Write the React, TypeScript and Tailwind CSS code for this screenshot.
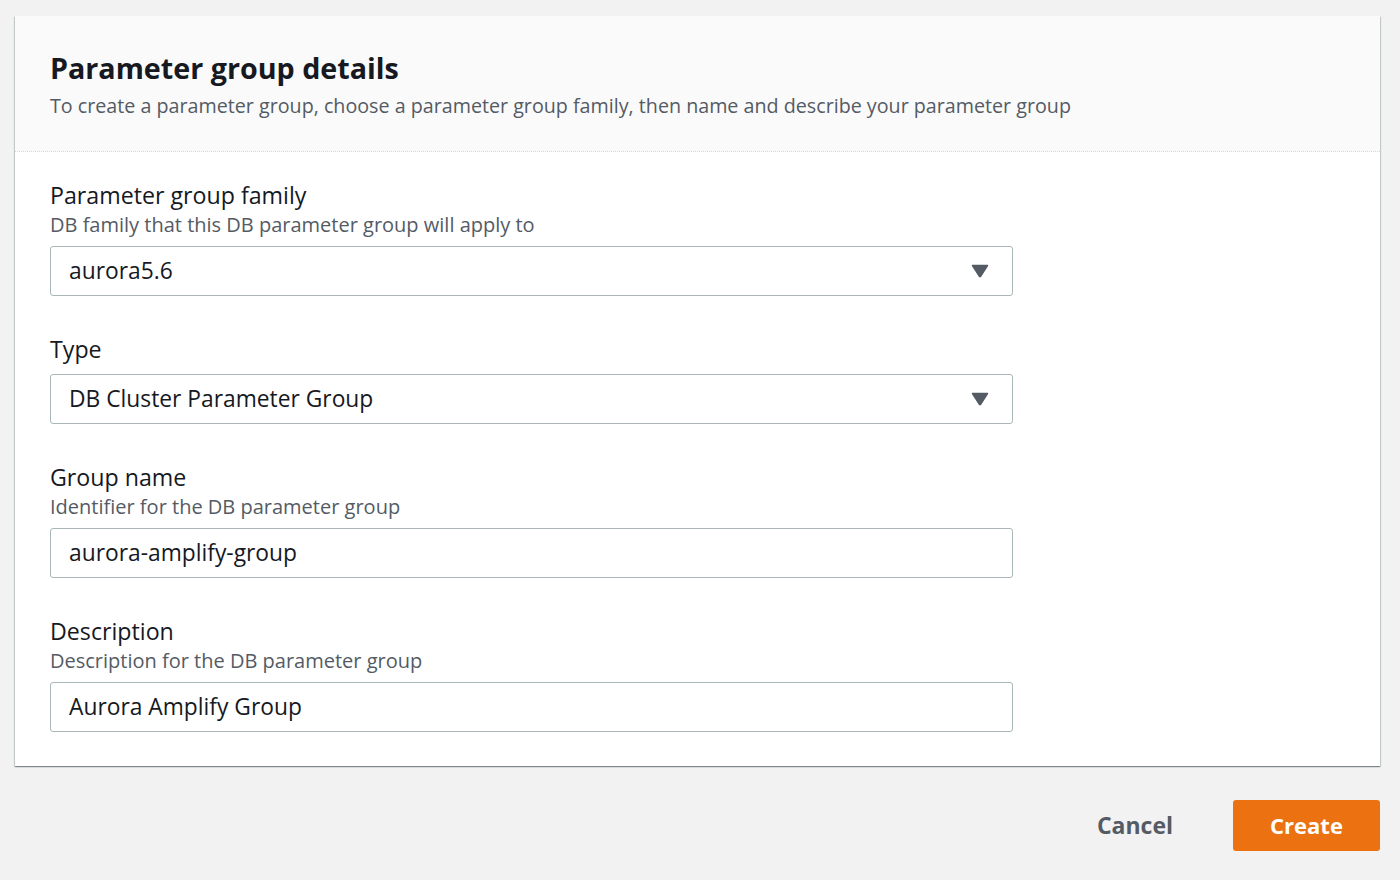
import React from 'react';

const font = { fontFamily: '"Open Sans", "Noto Sans", Arial, sans-serif' };

interface FieldProps {
  label: string;
  hint?: string;
  value: string;
  select?: boolean;
}

const Caret = () => (
  <svg width="18" height="14" viewBox="0 0 18 14" className="shrink-0">
    <path d="M1.5 1.5 H16.5 L9.6 12.3 Q9 13.2 8.4 12.3 Z" fill="#545b64" stroke="#545b64" strokeWidth="1.5" strokeLinejoin="round" />
  </svg>
);

const Field: React.FC<FieldProps> = ({ label, hint, value, select }) => {
  return (
    <div className="w-[963px]">
      <div className="text-[23.2px] leading-[28px] text-[#16191f]">{label}</div>
      {hint && (
        <div className="mt-[3px] text-[20px] leading-[26px] text-[#545b64]">{hint}</div>
      )}
      <div
        className={
          hint
            ? 'mt-2 flex h-[50px] items-center justify-between rounded-[3px] border border-[#aab7b8] bg-white pl-[18px] pr-[23px]'
            : 'mt-[11px] flex h-[50px] items-center justify-between rounded-[3px] border border-[#aab7b8] bg-white pl-[18px] pr-[23px]'
        }
      >
        <span className="text-[22.8px] text-[#16191f]">{value}</span>
        {select && <Caret />}
      </div>
    </div>
  );
};

export default function App() {
  return (
    <div className="min-h-[880px] bg-[#f2f2f2] px-[15px] pt-[16px]" style={font}>
      <div className="w-[1365px] bg-white shadow-[0_1px_1px_0_rgba(0,28,36,0.3),1px_1px_1px_0_rgba(0,28,36,0.15),-1px_1px_1px_0_rgba(0,28,36,0.15)]">
        <div className="border-b border-dotted border-[#d5dbdb] bg-[#fafafa] px-[35px] pb-[32px] pt-[34px]">
          <h1 className="text-[28.7px] font-bold leading-[36px] text-[#16191f]">
            Parameter group details
          </h1>
          <p className="mt-[7px] text-[19.7px] leading-[26px] text-[#545b64]">
            To create a parameter group, choose a parameter group family, then name and describe your parameter group
          </p>
        </div>
        <div className="flex flex-col gap-[39px] px-[35px] pb-[34px] pt-[29px]">
          <Field
            label="Parameter group family"
            hint="DB family that this DB parameter group will apply to"
            value="aurora5.6"
            select
          />
          <Field label="Type" value="DB Cluster Parameter Group" select />
          <Field
            label="Group name"
            hint="Identifier for the DB parameter group"
            value="aurora-amplify-group"
          />
          <Field
            label="Description"
            hint="Description for the DB parameter group"
            value="Aurora Amplify Group"
          />
        </div>
      </div>
      <div className="mt-[34px] flex w-[1365px] items-center justify-end gap-[40px]">
        <button className="h-[51px] px-[20px] text-[23px] font-bold text-[#545b64]">Cancel</button>
        <button className="h-[51px] w-[147px] rounded-[3px] bg-[#ec7211] text-[22px] font-bold text-white">
          Create
        </button>
      </div>
    </div>
  );
}
